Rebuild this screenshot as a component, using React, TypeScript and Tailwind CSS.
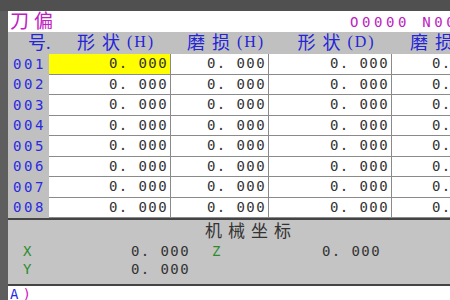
import React from 'react';

const mono = { fontFamily: '"DejaVu Sans Mono", "Liberation Mono", monospace' };
const cjk = { fontFamily: '"Liberation Serif", "Noto Sans CJK SC", serif' };

const cols = [
  { w: 'w-[122px]', label: '形状', sub: '(H)' },
  { w: 'w-[98px]', label: '磨损', sub: '(H)' },
  { w: 'w-[123px]', label: '形状', sub: '(D)' },
  { w: 'w-[102px]', label: '磨损', sub: '(D)' },
];

const rows = ['001', '002', '003', '004', '005', '006', '007', '008'];

const App: React.FC = () => {
  return (
    <div className="w-[450px] h-[300px] overflow-hidden bg-[#505050] flex flex-col">
      {/* top frame */}
      <div className="h-[11px] shrink-0" />

      <div className="flex flex-1 min-h-0">
        {/* left frame */}
        <div className="w-[8px] shrink-0 bg-[#5e5e5e]" />

        <div className="flex-1 min-w-0 flex flex-col bg-white overflow-hidden">
          {/* Title bar */}
          <div className="h-[21px] shrink-0 flex items-center text-[#c020c0] whitespace-nowrap">
            <span className="w-[342px] shrink-0 pl-[2px] text-[19px] leading-none tracking-[5px]" style={cjk}>
              刀偏
            </span>
            <span className="text-[14px] leading-none tracking-[3.6px]" style={mono}>
              O0000 N0000
            </span>
          </div>

          {/* Header */}
          <div className="h-[22px] shrink-0 flex items-center bg-[#c0c0c0] text-[#2424d8] whitespace-nowrap">
            <div className="w-[41px] shrink-0 pl-[20px] text-[18px] leading-none" style={cjk}>
              号.
            </div>
            {cols.map((c, i) => (
              <div key={i} className={`${c.w} shrink-0 flex justify-center pl-[12px] leading-none`} style={cjk}>
                <span className="text-[18px] tracking-[7px]">{c.label}</span>
                <span className="text-[16px] tracking-[2px]">{c.sub}</span>
              </div>
            ))}
          </div>

          {/* Rows */}
          {rows.map((r, ri) => (
            <div key={r} className="h-[20.5px] shrink-0 flex whitespace-nowrap">
              <div
                className="w-[41px] shrink-0 bg-[#c0c0c0] flex items-center pl-[5px] text-[14px] tracking-[2.6px] text-[#2a2ae0]"
                style={mono}
              >
                {r}
              </div>
              {cols.map((c, ci) => (
                <div
                  key={ci}
                  className={`${c.w} shrink-0 flex items-center justify-end pr-[2px] border-b border-r border-[#8a8a8a] text-[14px] tracking-[1.4px] text-[#333333] ${
                    ri === 0 && ci === 0 ? 'bg-[#ffff00]' : 'bg-white'
                  }`}
                  style={mono}
                >
                  0. 000
                </div>
              ))}
            </div>
          ))}

          {/* Machine coordinates */}
          <div className="shrink-0 border-y-2 border-[#444444] bg-[#c4c4c4] h-[68px] flex flex-col">
            <div
              className="h-[22px] pl-[197px] flex items-center text-[17px] leading-none tracking-[6px] text-[#333333]"
              style={cjk}
            >
              机械坐标
            </div>
            <div className="h-[18px] flex items-center text-[14px] tracking-[1.4px] whitespace-nowrap" style={mono}>
              <span className="w-[15px] shrink-0" />
              <span className="w-[108px] shrink-0 text-[#2c8c2c]">X</span>
              <span className="w-[81px] shrink-0 text-[#333333]">0. 000</span>
              <span className="w-[110px] shrink-0 text-[#2c8c2c]">Z</span>
              <span className="text-[#333333]">0. 000</span>
            </div>
            <div className="h-[18px] flex items-center text-[14px] tracking-[1.4px] whitespace-nowrap" style={mono}>
              <span className="w-[15px] shrink-0" />
              <span className="w-[108px] shrink-0 text-[#2c8c2c]">Y</span>
              <span className="text-[#333333]">0. 000</span>
            </div>
          </div>

          {/* Input line */}
          <div className="flex-1 flex items-start pl-[2px] pt-[1px] text-[14px] leading-none" style={mono}>
            <span className="text-[#2a2ae0]">A</span>
            <span className="text-[#d020c0] pl-[4px]">)</span>
          </div>
        </div>
      </div>
    </div>
  );
};

export default App;
